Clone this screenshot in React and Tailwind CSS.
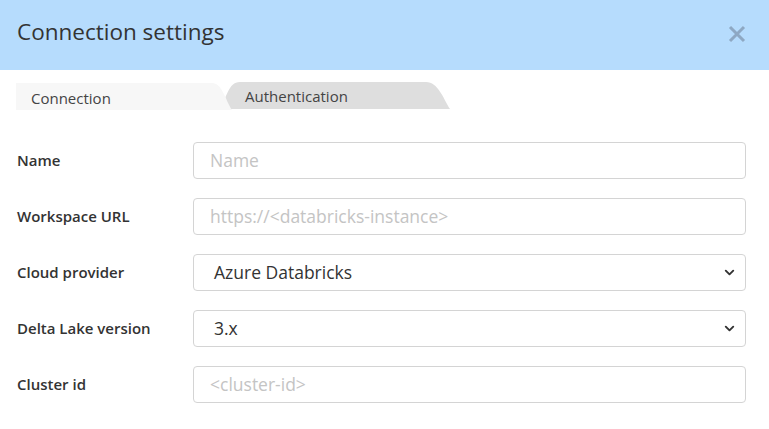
import { ChevronDown } from 'lucide-react';

const fields = [
    { label: 'Name', placeholder: 'Name' },
    { label: 'Workspace URL', placeholder: 'https://<databricks-instance>' },
    { label: 'Cloud provider', select: 'Azure Databricks' },
    { label: 'Delta Lake version', select: '3.x' },
    { label: 'Cluster id', placeholder: '<cluster-id>' },
];

function Tab({ label, active, width, className = '' }) {
    return (
        <div className={`relative h-[27px] ${className}`} style={{ width }}>
            <svg className="absolute inset-0" width={width} height="27" viewBox={`0 0 ${width} 27`}>
                {active ? (
                    <path d={`M0 0 H${width - 20} C${width - 10} 0 ${width - 7} 16 ${width} 27 H0 Z`} fill="#f7f7f7" />
                ) : (
                    <path d={`M0 27 C7 16 8 0 20 0 H${width - 24} C${width - 12} 0 ${width - 7} 16 ${width} 27 Z`} fill="#dedede" />
                )}
            </svg>
            <span className={`relative block text-[15px] text-[#444] ${active ? 'pl-[15px] pt-[4px]' : 'pl-[25px] pt-[3px]'}`}>
                {label}
            </span>
        </div>
    );
}

export default function App() {
    return (
        <div className="w-[769px] h-[429px] bg-white font-['Open_Sans',sans-serif] text-[#333] overflow-hidden">
            <div className="h-[70px] bg-[#b6dcfd] flex items-center justify-between pl-[17px] pr-[23px]">
                <h1 className="text-[22.5px] font-normal text-[#333] -mt-[6px]">Connection settings</h1>
                <svg width="18" height="18" viewBox="0 0 18 18" className="-mt-[2px]">
                    <path d="M2 2 L16 16 M16 2 L2 16" stroke="#8ea8c3" strokeWidth="3" />
                </svg>
            </div>

            <div className="flex pl-[16px] pt-[13px]">
                <Tab label="Connection" active width={216} className="z-10" />
                <Tab label="Authentication" width={230} className="-ml-[12px] -mt-px" />
            </div>

            <div className="flex flex-col gap-[19px] pt-[32px] pl-[17px] pr-[23px]">
                {fields.map((f) => (
                    <div key={f.label} className="flex items-center">
                        <label className="w-[176px] text-[15px] font-semibold text-[#333]">{f.label}</label>
                        <div className="flex-1 h-[37px] border border-[#d4d4d4] rounded-[4px] flex items-center justify-between pr-[8px]">
                            {f.select ? (
                                <>
                                    <span className="pl-[20px] text-[17.5px] text-[#333]">{f.select}</span>
                                    <ChevronDown size={15} strokeWidth={3} className="text-[#333]" />
                                </>
                            ) : (
                                <span className="pl-[16px] text-[17.5px] text-[#c4c4c4]">{f.placeholder}</span>
                            )}
                        </div>
                    </div>
                ))}
            </div>
        </div>
    );
}
